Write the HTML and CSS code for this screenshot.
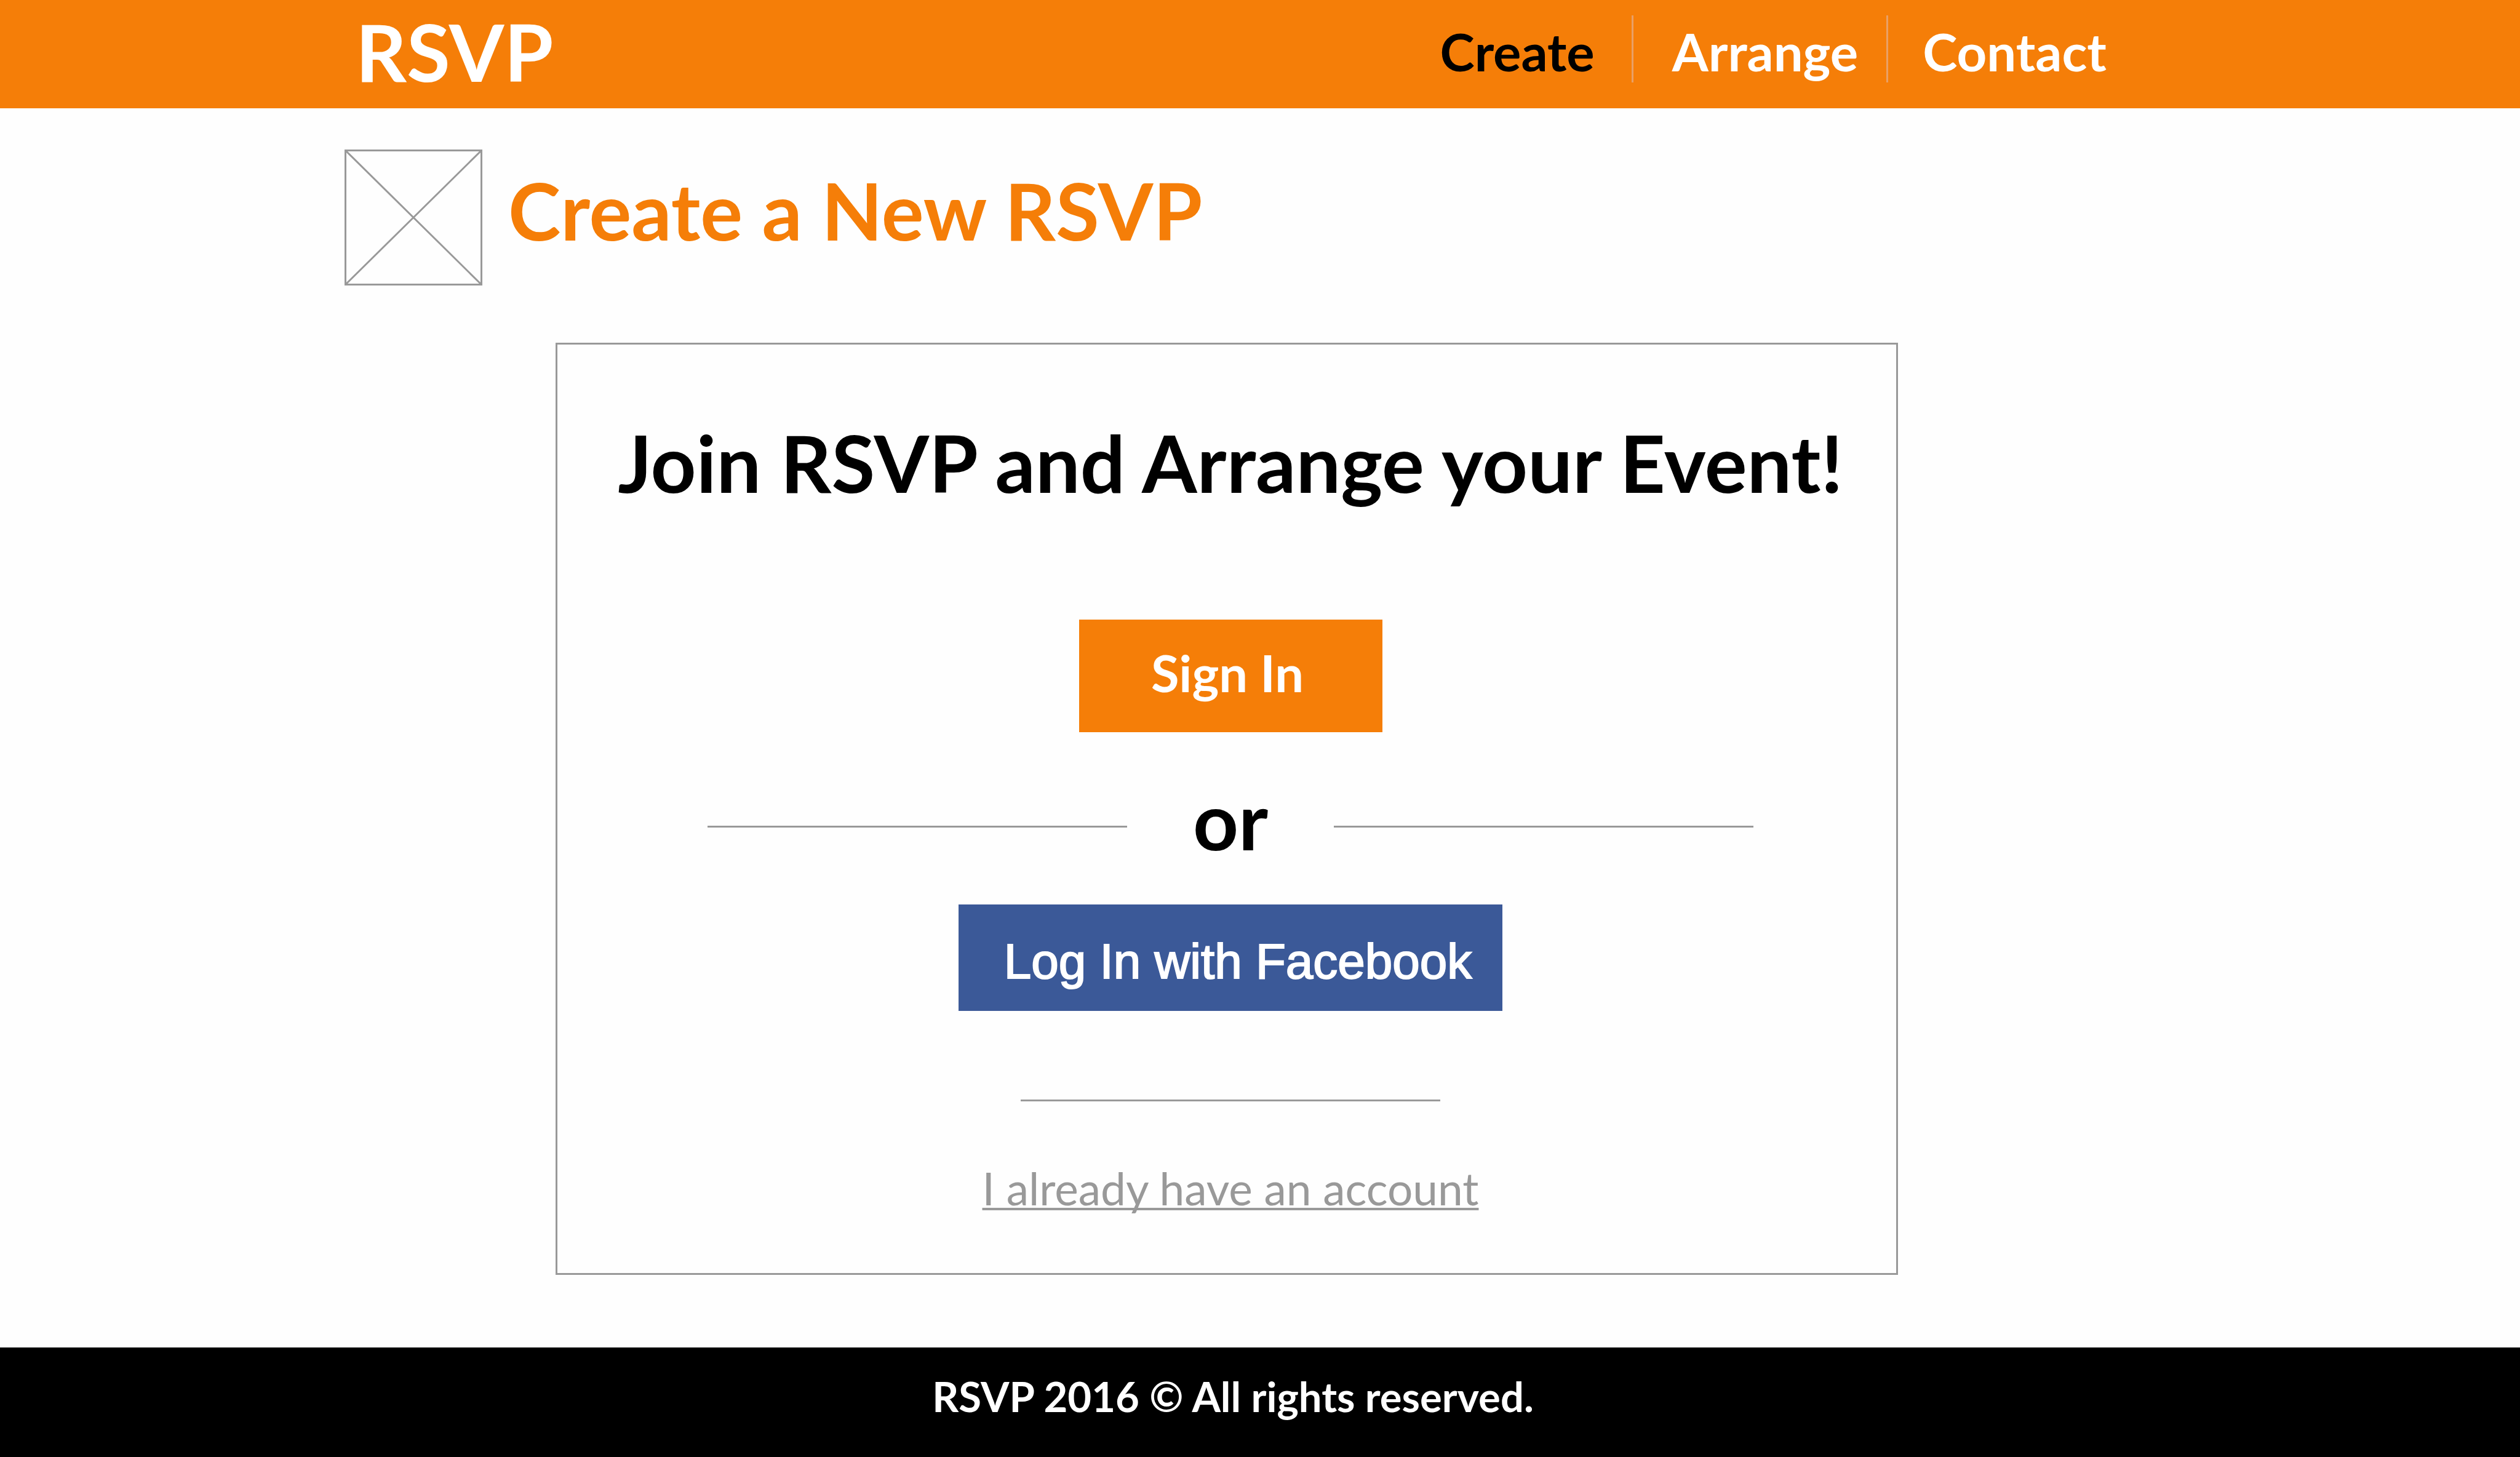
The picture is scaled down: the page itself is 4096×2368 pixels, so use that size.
FILE: index.html
```html
<!DOCTYPE html>
<html lang="en">
<head>
  <meta charset="utf-8">
  <meta name="viewport" content="width=device-width, initial-scale=1">
  <title>RSVP - Create a New RSVP</title>
  <link rel="stylesheet" href="styles.css">
</head>
<body>
  <header class="site-header">
    <a class="logo" href="#">RSVP</a>
    <nav>
      <ul class="nav-list">
        <li class="nav-item"><a class="nav-link current" href="#" aria-current="page">Create</a></li>
        <li class="nav-item"><a class="nav-link" href="#">Arrange</a></li>
        <li class="nav-item"><a class="nav-link" href="#">Contact</a></li>
      </ul>
    </nav>
  </header>

  <main class="content">
    <div class="page-head">
      <svg class="placeholder" viewBox="0 0 224 221" aria-hidden="true">
        <rect x="1.5" y="1.5" width="221" height="218"/>
        <path d="M2 2L222 219M222 2L2 219"/>
      </svg>
      <h1 class="page-title">Create a New RSVP</h1>
    </div>

    <section class="card">
      <h2 class="card-title">Join RSVP and Arrange your Event!</h2>
      <button class="btn btn-primary" type="button">Sign In</button>
      <div class="divider">
        <hr class="rule">
        <span class="divider-text">or</span>
        <hr class="rule">
      </div>
      <button class="btn btn-facebook" type="button">Log In with Facebook</button>
      <hr class="rule rule-short">
      <a class="account-link" href="#">I already have an account</a>
    </section>
  </main>

  <footer class="site-footer">
    <p class="copyright">RSVP 2016 © All rights reserved.</p>
  </footer>
</body>
</html>
```

FILE: styles.css
```css
:root {
  --orange: #f57e08;
  --blue: #3b5998;
  --grey: #999;
}

* {
  box-sizing: border-box;
}

body {
  margin: 0;
  min-height: 100vh;
  display: flex;
  flex-direction: column;
  background: #fefefe;
  color: #000;
  font-family: Lato, "Liberation Sans", sans-serif;
  font-weight: 700;
}

h1,
h2,
p,
ul {
  margin: 0;
  padding: 0;
}

.site-header {
  display: flex;
  justify-content: space-between;
  align-items: flex-start;
  height: 176px;
  padding: 7px 672px 0 578px;
  background: var(--orange);
}

.logo {
  color: #fff;
  font-size: 129px;
  line-height: 152px;
  text-decoration: none;
}

.nav-list {
  display: flex;
  margin-top: 18px;
  list-style: none;
}

.nav-item {
  height: 109px;
  padding: 8px 46px 0 56px;
  border-right: 3px solid #e9a066;
}

.nav-item:first-child {
  padding-right: 60px;
}

.nav-item:nth-child(2) {
  padding-left: 63px;
}

.nav-item:last-child {
  padding-right: 0;
  border-right: 0;
}

.nav-link {
  color: #fff;
  font-size: 85px;
  line-height: 100px;
  text-decoration: none;
}

.nav-link.current {
  color: #000;
}

.content {
  padding: 67px 560px 118px;
}

.page-head {
  display: flex;
  gap: 42px;
}

.placeholder {
  width: 224px;
  height: 221px;
  fill: none;
  stroke: var(--grey);
  stroke-width: 3px;
}

.page-title {
  padding-top: 22px;
  color: var(--orange);
  font-size: 129px;
  line-height: 152px;
}

.card {
  display: flex;
  flex-direction: column;
  align-items: center;
  margin: 93px 451px 0 343px;
  padding: 115px 84px 93px 96px;
  border: 3px solid var(--grey);
}

.card-title {
  margin-bottom: 180px;
  font-size: 129px;
  line-height: 152px;
  white-space: nowrap;
}

.btn {
  border: 0;
  border-radius: 0;
  color: #fff;
  white-space: nowrap;
  cursor: pointer;
}

.btn-primary {
  width: 493px;
  padding: 36px 10px 47px 0;
  background: var(--orange);
  font: 700 83px/100px Lato, "Liberation Sans", sans-serif;
}

.divider {
  display: flex;
  align-items: center;
  justify-content: center;
  width: 1700px;
  max-width: 100%;
  margin: 66px 0 62px;
}

.divider-text {
  flex: 0 0 336px;
  font-size: 129px;
  line-height: 152px;
  text-align: center;
}

.rule {
  flex: 1;
  height: 3px;
  margin: 23px 0 0;
  border: 0;
  background: var(--grey);
}

.btn-facebook {
  width: 884px;
  padding: 48px 0 35px 24px;
  background: var(--blue);
  font: 400 80px/90px "Liberation Sans", Arial, sans-serif;
  -webkit-text-stroke: 2px #fff;
}

.rule-short {
  flex: none;
  width: 682px;
  margin: 144px 0 96px;
}

.account-link {
  color: var(--grey);
  font-size: 73px;
  font-weight: 400;
  line-height: 90px;
  text-decoration-thickness: 4px;
  text-decoration-skip-ink: none;
  text-underline-offset: 4px;
}

.site-footer {
  flex: 1;
  padding: 37px 88px 55px 0;
  background: #000;
  color: #fff;
  text-align: center;
}

.copyright {
  font-size: 67px;
  line-height: 84px;
}
```
